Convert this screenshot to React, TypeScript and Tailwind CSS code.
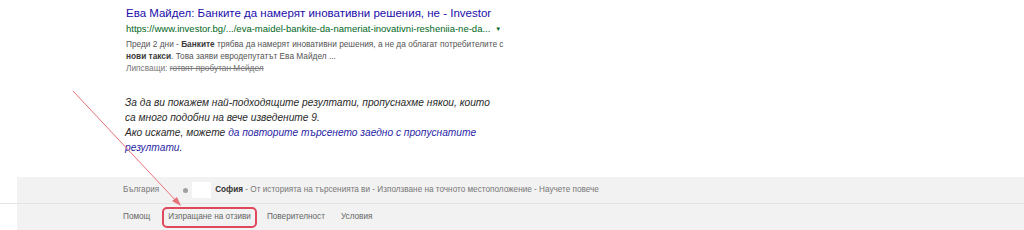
export default function App() {
  return (
    <div className="relative flex h-[230px] w-[1024px] flex-col overflow-hidden bg-white font-['Liberation_Sans',Arial,sans-serif]">
      {/* search result */}
      <div className="whitespace-nowrap pl-[126px] pt-[6px]">
        <div className="text-[11.5px] leading-[14px] text-[#1a0dab]">
          Ева Майдел: Банките да намерят иновативни решения, не - Investor
        </div>
        <div className="mt-[3px] flex items-center text-[9.5px] leading-[12px] text-[#006621]">
          https://www.investor.bg/.../eva-maidel-bankite-da-nameriat-inovativni-resheniia-ne-da...
          <span className="ml-[5px] text-[6px]">▼</span>
        </div>
        <div className="mt-[3px] text-[8.3px] leading-[12px] text-[#545454]">
          Преди 2 дни - <b className="text-[#3a3a3a]">Банките</b> трябва да намерят иновативни решения, а не да облагат потребителите с
          <br />
          <b className="text-[#3a3a3a]">нови такси</b>. Това заяви евродепутатът Ева Майдел ...
        </div>
        <div className="text-[8.3px] leading-[12px] text-[#777]">
          Липсващи: <span className="line-through">готвят пробутан Мейдел</span>
        </div>
      </div>

      {/* omitted results notice */}
      <div className="mt-[21px] whitespace-nowrap pl-[125px] text-[10.2px] italic leading-[15px] text-[#2a2a2a]">
        За да ви покажем най-подходящите резултати, пропуснахме някои, които
        <br />
        са много подобни на вече изведените 9.
        <br />
        Ако искате, можете <span className="text-[#2a1fa6]">да повторите търсенето заедно с пропуснатите</span>
        <br />
        <span className="text-[#2a1fa6]">резултати</span>.
      </div>

      {/* footer */}
      <div className="mt-auto flex flex-col">
        <div className="ml-[17px] flex h-[26px] items-center whitespace-nowrap bg-[#f2f2f2] pl-[106px] text-[8.2px] text-[#777]">
          <span>България</span>
          <span className="ml-[24px] h-[5px] w-[5px] rounded-full bg-[#a0a0a0]" />
          <span className="ml-[4px] h-[16px] w-[19px] bg-white" />
          <span className="ml-[4px] font-bold text-[#333]">София</span>
          <span>&nbsp;- От историята на търсенията ви - Използване на точното местоположение - Научете повече</span>
        </div>
        <div className="h-px bg-[#e4e4e4]" />
        <div className="ml-[17px] flex h-[26px] items-center whitespace-nowrap bg-[#f2f2f2] pl-[106px] text-[8.2px] text-[#666]">
          <span>Помощ</span>
          <span className="ml-[12px] flex h-[21px] items-center rounded-[5px] border-2 border-[#e0485e] px-[4px]">
            Изпращане на отзиви
          </span>
          <span className="ml-[10px]">Поверителност</span>
          <span className="ml-[16px]">Условия</span>
        </div>
      </div>

      {/* annotation arrow */}
      <svg className="pointer-events-none absolute left-0 top-0" width="1024" height="230">
        <line x1="73" y1="91" x2="179" y2="204" stroke="#e8707a" strokeWidth="1" />
        <polygon points="181,206 172,201 177,197" fill="#e8707a" />
      </svg>
    </div>
  );
}
